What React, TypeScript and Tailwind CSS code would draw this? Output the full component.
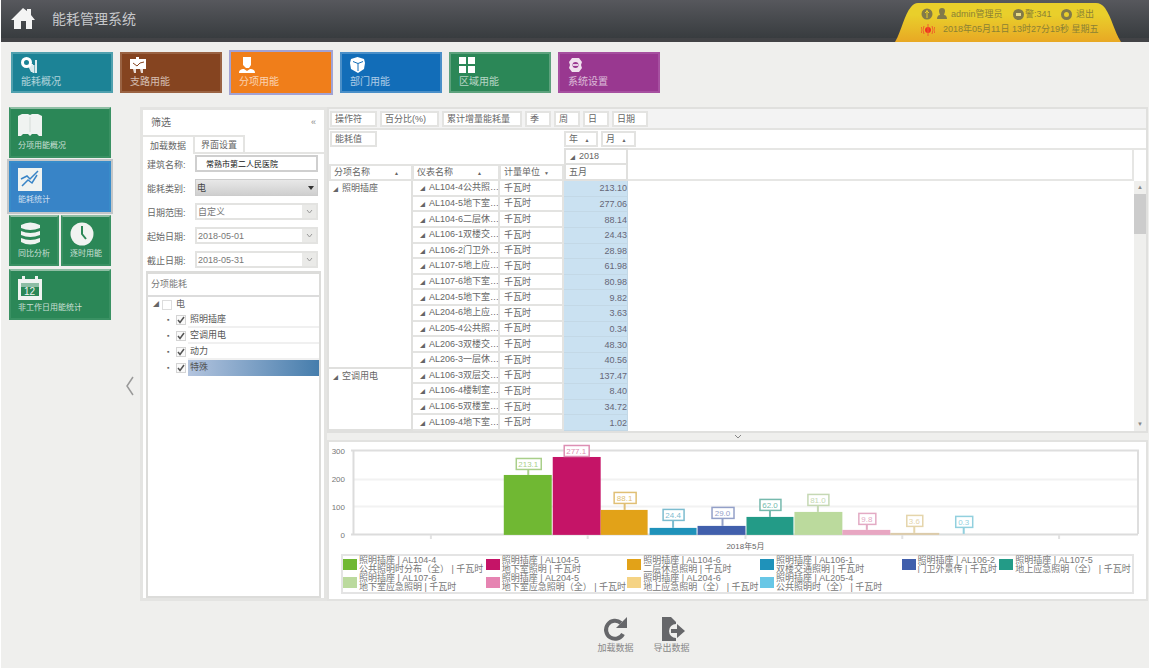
import React from "react";

type Row = { name: string; value: string };

const lightingRows: Row[] = [
  { name: "AL104-4公共照…", value: "213.10" },
  { name: "AL104-5地下室…", value: "277.06" },
  { name: "AL104-6二层休…", value: "88.14" },
  { name: "AL106-1双楼交…", value: "24.43" },
  { name: "AL106-2门卫外…", value: "28.98" },
  { name: "AL107-5地上应…", value: "61.98" },
  { name: "AL107-6地下室…", value: "80.98" },
  { name: "AL204-5地下室…", value: "9.82" },
  { name: "AL204-6地上应…", value: "3.63" },
  { name: "AL205-4公共照…", value: "0.34" },
  { name: "AL206-3双楼交…", value: "48.30" },
  { name: "AL206-3一层休…", value: "40.56" },
];

const airRows: Row[] = [
  { name: "AL106-3双层交…", value: "137.47" },
  { name: "AL106-4楼制室…", value: "8.40" },
  { name: "AL106-5双楼室…", value: "34.72" },
  { name: "AL109-4地下室…", value: "1.02" },
];

const bars = [
  { x: 175, w: 48, top: 33, color: "#70b833", soft: "#a9cf8a", label: "213.1", lx: 187, lw: 25, ly: 16 },
  { x: 224, w: 48, top: 15, color: "#c51467", soft: "#dd8fb3", label: "277.1", lx: 235, lw: 25, ly: 3 },
  { x: 272, w: 47, top: 68, color: "#e2a218", soft: "#e0bf74", label: "88.1", lx: 285, lw: 22, ly: 50 },
  { x: 321, w: 47, top: 86, color: "#1f92ba", soft: "#7cbccf", label: "24.4", lx: 334, lw: 21, ly: 67 },
  { x: 369, w: 48, top: 84, color: "#415fac", soft: "#93a0c8", label: "29.0", lx: 383, lw: 22, ly: 65 },
  { x: 418, w: 47, top: 75, color: "#239b87", soft: "#76b9ad", label: "62.0", lx: 431, lw: 21, ly: 57 },
  { x: 466, w: 48, top: 70, color: "#bbda9d", soft: "#c5d8b4", label: "81.0", lx: 479, lw: 21, ly: 52 },
  { x: 514, w: 48, top: 88, color: "#e8a6c2", soft: "#e3aac4", label: "9.8", lx: 530, lw: 17, ly: 71 },
  { x: 562, w: 49, top: 91, color: "#dccbaa", soft: "#e5d5ab", label: "3.6", lx: 578, lw: 16, ly: 73 },
  { x: 611, w: 49, top: 92, color: "#dce0e0", soft: "#92d0de", label: "0.3", lx: 627, lw: 17, ly: 74 },
];

const legend = [
  { color: "bg-[#70b833]", a: "照明插座 | AL104-4", b: "公共照明时分布（全） | 千瓦时" },
  { color: "bg-[#c51467]", a: "照明插座 | AL104-5", b: "地下室照明 | 千瓦时" },
  { color: "bg-[#e2a218]", a: "照明插座 | AL104-6", b: "二层休息照明 | 千瓦时" },
  { color: "bg-[#1f92ba]", a: "照明插座 | AL106-1", b: "双楼交通照明 | 千瓦时" },
  { color: "bg-[#415fac]", a: "照明插座 | AL106-2", b: "门卫外景传 | 千瓦时" },
  { color: "bg-[#239b87]", a: "照明插座 | AL107-5", b: "地上应急照明（全） | 千瓦时" },
  { color: "bg-[#bbda9d]", a: "照明插座 | AL107-6", b: "地下室应急照明 | 千瓦时" },
  { color: "bg-[#e684b2]", a: "照明插座 | AL204-5", b: "地下室应急照明（全） | 千瓦时" },
  { color: "bg-[#f5d384]", a: "照明插座 | AL204-6", b: "地上应急照明（全） | 千瓦时" },
  { color: "bg-[#68c7e6]", a: "照明插座 | AL205-4", b: "公共照明时（全） | 千瓦时" },
];

const navItems = [
  {
    label: "能耗概况",
    cls: "h-[41px] w-[102px] bg-[#1c8396] border-[#4fa0ae]",
    icon: (
      <>
        <path fillRule="evenodd" d="M5.500 0a5.500 5.500 0 1 0 0 11 5.500 5.500 0 0 0 0-11Zm0 3a2.500 2.500 0 1 1 0 5 2.500 2.500 0 0 1 0-5Z" />
        <path d="M8 8l2-1h2v8h-2l-2-4ZM14 3h2v13h-2ZM11.500 8h2v8h-2Z" opacity=".85" />
      </>
    ),
  },
  {
    label: "支路用能",
    cls: "h-[41px] w-[102px] bg-[#854420] border-[#9a6343]",
    icon: (
      <>
        <path d="M0 2h6V0h3v2h7v10H0Z" />
        <path d="M3 12h3v4H4ZM10 12h3v4h-2Z" opacity=".8" />
        <path d="M3 6l4 3 3-3 4-1" stroke="#854420" fill="none" />
      </>
    ),
  },
  {
    label: "分项用能",
    cls: "-mt-[2px] h-[45px] w-[104px] bg-[#f07e1a] border-[#a2a2d4]",
    icon: <path d="M4 0h8v8l-2 3H7L4 8ZM0 16c0-3 2-4 5-4l3 2 3-2c3 0 5 1 5 4Z" />,
  },
  {
    label: "部门用能",
    cls: "h-[41px] w-[102px] bg-[#126db8] border-[#4a8fc8]",
    icon: (
      <>
        <path d="M7.500 0L14 2l1 4-1 6-6 4-7-4-1-6 1-4Z" />
        <path d="M3 4.500l5 2 5-2M8 6.500V14" stroke="#126db8" fill="none" />
      </>
    ),
  },
  {
    label: "区域用能",
    cls: "h-[41px] w-[102px] bg-[#2b8757] border-[#5da27d]",
    icon: <path d="M0 0h7v7H0ZM9 0h7v7H9ZM0 9h7v7H0ZM9 9h7v7H9Z" />,
  },
  {
    label: "系统设置",
    cls: "h-[41px] w-[102px] bg-[#993890] border-[#a650a0]",
    icon: (
      <>
        <path
          fillRule="evenodd"
          d="M4 1h7l3 4-1 3 1 3-3 4H4l-3-4 1-3-1-3Zm3.500 4a3 3 0 1 0 0 6 3 3 0 0 0 0-6Z"
          opacity=".85"
        />
        <path d="M5 8h5" stroke="#fff" strokeWidth="1.500" />
      </>
    ),
  },
];

function Header() {
  return (
    <header className="flex h-[42px] items-start justify-between border-b-4 border-[#424346] bg-linear-to-b from-[#57585d] to-[#383c3f] pr-7">
      <div className="flex items-center gap-4 pt-[5px] pl-[9px]">
        <svg width="26" height="28" viewBox="0 0 26 28" fill="#f4f4f4" aria-hidden="true">
          <path d="M13 3l4 3V4h4v6l4 5h-3v9h-6v-8h-5v8H4v-9H1Z" />
        </svg>
        <h1 className="text-[14px] leading-5 text-[#c6c7ca]">能耗管理系统</h1>
      </div>
      <div className="relative h-[42px] w-[226px] shrink-0 pt-[8px] pl-[26px] text-[9px] text-[#8b8135]">
        <svg className="absolute inset-0" width="226" height="42" viewBox="0 0 226 42" aria-hidden="true">
          <defs>
            <linearGradient id="tab" x1="0" y1="0" x2="0" y2="1">
              <stop offset="0.300" stopColor="#e9cf2b" />
              <stop offset="1" stopColor="#e8a824" />
            </linearGradient>
          </defs>
          <path d="M0 42C7 30 9 15 16 7q3-4 7-4H201q5 0 9 5c7 10 9 23 16 34Z" fill="url(#tab)" />
        </svg>
        <div className="relative flex h-3 items-center leading-3 whitespace-nowrap">
          <svg width="12" height="12" viewBox="0 0 12 12" aria-hidden="true">
            <circle cx="6" cy="6" r="5.500" fill="#827a49" />
            <path d="M6 2v8M4 5l2-2 2 2" stroke="#e9cf2b" fill="none" />
          </svg>
          <svg className="mr-1 ml-1" width="10" height="12" viewBox="0 0 10 12" fill="#827a49" aria-hidden="true">
            <path d="M2 3a3 3 0 0 1 6 0c0 2-1 3-1 4 2 0 3 2 3 4H0c0-2 1-4 3-4 0-1-1-2-1-4Z" />
          </svg>
          <span className="w-[62px]">admin管理员</span>
          <svg width="11" height="11" viewBox="0 0 11 11" aria-hidden="true">
            <circle cx="5.500" cy="5.500" r="5.500" fill="#827a49" />
            <rect x="3" y="4" width="5" height="3" fill="#e9dc86" />
          </svg>
          <span className="ml-px w-9">警:341</span>
          <svg width="11" height="11" viewBox="0 0 11 11" aria-hidden="true">
            <circle cx="5.500" cy="5.500" r="4" fill="none" stroke="#827a49" strokeWidth="3" />
          </svg>
          <a href="#logout" className="ml-1">退出</a>
        </div>
        <div className="relative flex h-[19px] items-center gap-2 whitespace-nowrap">
          <svg width="14" height="12" viewBox="0 0 14 12" aria-hidden="true">
            <circle cx="7" cy="6" r="3" fill="#f03420" />
            <path d="M3 2q-2 4 0 8M11 2q2 4 0 8M7 0v12M.5 3q-1 3 0 6M13.500 3q1 3 0 6" stroke="#f0602a" fill="none" />
          </svg>
          <time>2018年05月11日 13时27分19秒 星期五</time>
        </div>
      </div>
    </header>
  );
}

function TopNav() {
  return (
    <nav className="flex h-[51px] items-start gap-[7px] px-[10px] pt-[10px]">
      {navItems.map((n) => (
        <button
          key={n.label}
          className={"flex flex-col justify-center border-2 pl-2 text-left text-[10px] leading-3 text-white " + n.cls}
        >
          <svg width="16" height="16" viewBox="0 0 16 16" fill="#fff" aria-hidden="true">
            {n.icon}
          </svg>
          <span className="mt-[3px] text-white/65">{n.label}</span>
        </button>
      ))}
    </nav>
  );
}

function Tile({ label, cls, children }: { label: string; cls: string; children: React.ReactNode }) {
  return (
    <button
      className={"flex h-[51px] flex-1 flex-col border-2 pt-[5px] pl-[7px] text-left text-[8px] leading-3 whitespace-nowrap text-white/75 " + cls}
    >
      <svg width="24" height="24" viewBox="0 0 24 24" fill="#f0f3f1" aria-hidden="true">
        {children}
      </svg>
      <span className="mt-[2px]">{label}</span>
    </button>
  );
}

const green = "bg-[#2b8757] border-[#3a9163] border-t-[#8fbea4]";

function Sidebar() {
  return (
    <aside className="flex w-[102px] shrink-0 flex-col gap-[3px]">
      <div className="flex">
        <Tile label="分项用能概况" cls={green}>
          <path d="M0 2l4-2h6l2 1 2-1h6l4 2v20h-3l-2-2h-5l-2 2-2-2H5l-2 2H0Z" />
          <path d="M12 3v15" stroke="#d5dcd8" />
        </Tile>
      </div>
      <div className="flex">
        <Tile label="能耗统计" cls="bg-[#3884c7] border-[#388cca] outline-2 outline-[#c3c6c8]">
          <path d="M0 0h24v23H0Z" />
          <path d="M3 11l6-3 3 3 8-8M4 18l6-6 4 3 5-8" stroke="#3884c7" strokeWidth="1.500" fill="none" />
        </Tile>
      </div>
      <div className="flex gap-[2px]">
        <Tile label="同比分析" cls={green}>
          <path d="M3 3q9-5 19 0v3q-10 4-19 0ZM3 9q9 4 19 0v4q-10 4-19 0ZM3 16q9 4 19 0v4q-10 5-19 0Z" />
        </Tile>
        <Tile label="逐时用能" cls={green}>
          <circle cx="12" cy="12" r="11.500" />
          <path d="M12 4v8l4 5" stroke="#2b8757" strokeWidth="2" fill="none" />
        </Tile>
      </div>
      <div className="flex">
        <Tile label="非工作日用能统计" cls={green}>
          <path fillRule="evenodd" d="M0 3h4V0h3v3h10V0h3v3h4v21H0ZM3 7v13h18V7Z" />
          <path d="M3 7h18v4H3Z" opacity=".5" />
          <text x="6" y="19" fontSize="10">12</text>
        </Tile>
      </div>
    </aside>
  );
}

const labelCls = "w-[48px] shrink-0 pt-[3px] text-[9px] leading-4 text-[#666] whitespace-nowrap";

function PickRow({ id, label, value }: { id: string; label: string; value: string }) {
  return (
    <div className="flex h-[17px] items-center">
      <label htmlFor={id} className={labelCls}>{label}</label>
      <div className="flex h-[17px] min-w-0 flex-1 border-2 border-[#e3e3e1]">
        <input id={id} defaultValue={value} className="w-full min-w-0 bg-white pl-px text-[9px] leading-3 text-[#777]" />
        <button aria-label={label + "展开"} className="w-[14px] shrink-0 bg-[#eaeae8]">
          <svg className="mx-auto" width="7" height="6" viewBox="0 0 7 6" aria-hidden="true">
            <path d="M1 1l2.500 3L6 1" stroke="#999" fill="none" />
          </svg>
        </button>
      </div>
    </div>
  );
}

function TreeItem({ label, checked, selected }: { label: string; checked: boolean; selected?: boolean }) {
  return (
    <li className="flex h-[16px] items-center pl-[19px]">
      <span className="w-[9px] text-[7px] leading-3 text-[#666]">▪</span>
      <label className="flex min-w-0 flex-1 items-center">
        <span className="relative mr-[2px] flex size-[10px] shrink-0 items-center justify-center">
          <input
            type="checkbox"
            defaultChecked={checked}
            className="peer size-[10px] appearance-none border border-[#d4d4d4] bg-[#fafafa]"
          />
          <svg className="pointer-events-none absolute hidden peer-checked:block" width="8" height="8" viewBox="0 0 8 8" aria-hidden="true">
            <path d="M1 4l2 2.500L7 1" stroke="#555" strokeWidth="1.500" fill="none" />
          </svg>
        </span>
        <span
          className={
            "h-[16px] flex-1 pl-[2px] leading-[15px] text-[#555] " +
            (selected ? "bg-linear-to-r from-[#b3c4de] to-[#457dac]" : "border-b-2 border-[#f0f0f0]")
          }
        >
          {label}
        </span>
      </label>
    </li>
  );
}

function FilterPanel() {
  return (
    <section className="flex w-[187px] shrink-0 flex-col border-[3px] border-[#e4e4e2] bg-white">
      <div className="flex h-[25px] items-center justify-between px-2 text-[10px] text-[#666]">
        <h2>筛选</h2>
        <button aria-label="收起" className="text-[9px] text-[#888]">«</button>
      </div>
      <div className="flex text-[9px] leading-4 text-[#666]" role="tablist">
        <button role="tab" aria-selected="true" className="h-[19px] w-[50px] border-t-2 border-[#e4e4e2]">加载数据</button>
        <button role="tab" aria-selected="false" className="h-[19px] w-[52px] border-2 border-[#e4e4e2]">界面设置</button>
        <span className="flex-1 border-b-2 border-[#e4e4e2]" />
      </div>
      <div className="flex flex-col gap-[7px] pr-[6px] pl-[4px] pt-px">
        <div className="flex h-[17px] items-center">
          <label htmlFor="building" className={labelCls}>建筑名称:</label>
          <input
            id="building"
            defaultValue="常熟市第二人民医院"
            className="h-[17px] min-w-0 flex-1 border-2 border-[#cfcfcf] bg-white pl-[9px] text-[8px] leading-3 text-[#111]"
          />
        </div>
        <div className="flex h-[17px] items-center">
          <label htmlFor="kind" className={labelCls}>能耗类别:</label>
          <div className="relative h-[17px] min-w-0 flex-1">
            <select
              id="kind"
              className="block h-[17px] w-full appearance-none border border-[#ccc] bg-linear-to-b from-[#e8e8e8] to-[#cfcfcf] pl-px text-[9px] leading-3 text-[#444]"
            >
              <option>电</option>
            </select>
            <svg className="pointer-events-none absolute top-[7px] right-[4px]" width="6" height="4" viewBox="0 0 6 4" aria-hidden="true">
              <path d="M0 0h6L3 4Z" fill="#333" />
            </svg>
          </div>
        </div>
        <PickRow id="range" label="日期范围:" value="自定义" />
        <PickRow id="start" label="起始日期:" value="2018-05-01" />
        <PickRow id="end" label="截止日期:" value="2018-05-31" />
      </div>
      <div className="mt-[3px] mr-[3px] ml-[3px] flex-1 border-2 border-t-[3px] border-[#dcdcda] text-[9px]">
        <div className="h-[23px] border-b-2 border-[#dcdcdc] pl-[3px] leading-[21px] text-[#777]">分项能耗</div>
        <ul>
          <li className="flex h-[15px] items-center pl-[5px] text-[#666]">
            <span className="w-[9px] text-[6px]">◢</span>
            <label className="flex items-center gap-1">
              <input type="checkbox" className="size-[10px] appearance-none border border-[#ddd] bg-white" />
              电
            </label>
          </li>
          <TreeItem label="照明插座" checked />
          <TreeItem label="空调用电" checked />
          <TreeItem label="动力" checked />
          <TreeItem label="特殊" checked selected />
        </ul>
      </div>
    </section>
  );
}

const chip = "h-[16px] border-2 border-[#e3e3e1] bg-white px-[3px] text-left leading-3 whitespace-nowrap";

function BodyRows({ group, rows }: { group: string; rows: Row[] }) {
  return (
    <>
      {rows.map((r, i) => (
        <tr key={r.name}>
          {i === 0 && (
            <th
              scope="rowgroup"
              rowSpan={rows.length}
              className="border-r-2 border-b-2 border-[#e0e0de] pt-px pl-1 text-left align-top font-normal"
            >
              <span className="mr-1 text-[5px]">◢</span>
              {group}
            </th>
          )}
          <td className="overflow-hidden border-r-2 border-b-2 border-[#e3e3e1] p-0 pl-[7px] whitespace-nowrap">
            <span className="mr-1 text-[5px]">◢</span>
            {r.name}
          </td>
          <td className="border-r-2 border-b-2 border-[#e3e3e1] p-0 pl-1">千瓦时</td>
          <td className="border-r border-b border-[#c3d8e6] bg-[#cae1f1] p-0 text-right text-[#667]">{r.value}</td>
        </tr>
      ))}
    </>
  );
}

function PivotGrid() {
  return (
    <section className="border-2 border-[#e0e0de] bg-white text-[9px] text-[#666]">
      <div className="flex h-[21px] items-center gap-[3px] border-b-2 border-[#e3e3e1] bg-[#f3f3f3] px-px">
        <button className={chip + " w-[47px]"}>操作符</button>
        <button className={chip + " w-[59px]"}>百分比(%)</button>
        <button className={chip + " w-[80px]"}>累计增量能耗量</button>
        <button className={chip + " w-[26px]"}>季</button>
        <button className={chip + " w-[26px]"}>周</button>
        <button className={chip + " w-[26px]"}>日</button>
        <button className={chip + " w-[36px]"}>日期</button>
      </div>
      <div className="flex h-[18px] items-center px-px">
        <div className="w-[234px]">
          <button className={chip + " w-[47px]"}>能耗值</button>
        </div>
        <div className="flex gap-[3px]">
          <button className={chip + " w-[34px]"}>年 <span className="ml-1 text-[5px]">▲</span></button>
          <button className={chip + " w-[35px]"}>月 <span className="ml-1 text-[5px]">▲</span></button>
        </div>
      </div>
      <div className="flex">
        <table className="w-[299px] shrink-0 table-fixed border-separate border-spacing-0 leading-3">
          <colgroup>
            <col className="w-[84px]" />
            <col className="w-[87px]" />
            <col className="w-[64px]" />
            <col className="w-[64px]" />
          </colgroup>
          <thead>
            <tr className="h-[15px]">
              <td colSpan={3} className="p-0" />
              <th className="border-2 border-b border-[#e0e0de] p-0 pl-1 text-left font-normal">
                <span className="mr-1 text-[5px]">◢</span>2018
              </th>
            </tr>
            <tr className="h-[17px]">
              <th className="border-2 border-[#e3e3e1] p-0 pl-[3px] text-left font-normal">
                分项名称<span className="ml-6 text-[5px]">▲</span>
              </th>
              <th className="border-2 border-l border-[#e3e3e1] p-0 pl-[3px] text-left font-normal">
                仪表名称<span className="ml-6 text-[5px]">▲</span>
              </th>
              <th className="border-2 border-l border-[#e3e3e1] p-0 pl-[3px] text-left font-normal">
                计量单位<span className="ml-1 text-[5px]">▼</span>
              </th>
              <th className="border-2 border-t border-[#e0e0de] p-0 pl-[3px] text-left font-normal">五月</th>
            </tr>
          </thead>
        </table>
        <div className="flex-1 border-t-2 border-r-2 border-b-2 border-[#e6e6e4]" />
        <div className="w-[12px] border-t-2 border-[#e6e6e4]" />
      </div>
      <div className="flex">
        <table className="h-[250px] w-[299px] shrink-0 table-fixed border-separate border-spacing-0 leading-3">
          <colgroup>
            <col className="w-[84px]" />
            <col className="w-[87px]" />
            <col className="w-[64px]" />
            <col className="w-[64px]" />
          </colgroup>
          <tbody>
            <BodyRows group="照明插座" rows={lightingRows} />
            <BodyRows group="空调用电" rows={airRows} />
          </tbody>
        </table>
        <div className="flex-1" />
        <div className="flex w-[12px] flex-col items-center bg-[#efefed] text-[6px] leading-[13px] text-[#888]">
          <span>▲</span>
          <div className="h-[40px] w-full bg-[#cccccc]" />
          <span className="mt-auto">▼</span>
        </div>
      </div>
    </section>
  );
}

function Chart() {
  return (
    <section className="flex-1 border-2 border-[#e2e2e0] bg-white">
      <svg className="block h-auto w-full" viewBox="0 0 818 112" fontFamily="Liberation Sans, Noto Sans CJK SC, sans-serif" role="img" aria-label="能耗柱状图">
        <path d="M24 37.500H810M24 64.500H810" stroke="#f2f2f2" strokeWidth="2" />
        <path d="M22 8.500H810V92" stroke="#dedede" strokeWidth="2" fill="none" />
        <path d="M24.500 8V93M22 92.500H810" stroke="#dcdcdc" strokeWidth="2" />
        <path d="M102 93v4M259 93v4M417 93v4M574 93v4M731 93v4" stroke="#e2e2e2" strokeWidth="2" />
        {[300, 200, 100, 0].map((v, i) => (
          <text key={v} x="16" y={12 + i * 28} textAnchor="end" fontSize="8" fill="#777">{v}</text>
        ))}
        {bars.map((b) => (
          <g key={b.label}>
            <rect x={b.x} y={b.top} width={b.w} height={93 - b.top} fill={b.color} />
            <path d={`M${b.lx + b.lw / 2} ${b.ly + 12}V${b.top}`} stroke={b.soft} strokeWidth="2" />
            <rect x={b.lx + 0.5} y={b.ly + 0.5} width={b.lw} height="11" fill="#fff" stroke={b.soft} strokeWidth="1.500" />
            <text x={b.lx + b.lw / 2} y={b.ly + 9} textAnchor="middle" fontSize="8" fill={b.soft}>{b.label}</text>
          </g>
        ))}
        <text x="417" y="107" textAnchor="middle" fontSize="8" fill="#666">2018年5月</text>
      </svg>
      <ul className="mx-3 grid grid-cols-[143fr_142fr_133fr_142fr_98fr_133fr] border-2 border-[#e4e4e4] text-[9px] leading-[9px] text-[#777]">
        {legend.map((l) => (
          <li key={l.a} className="flex items-center gap-[2px] whitespace-nowrap">
            <span className={"h-[11px] w-[14px] shrink-0 " + l.color} />
            <span>
              {l.a}
              <br />
              {l.b}
            </span>
          </li>
        ))}
      </ul>
    </section>
  );
}

export default function App() {
  return (
    <div className="min-h-screen bg-white pr-[2px] pb-[2px] pl-px font-['Liberation_Sans','Noto_Sans_CJK_SC',sans-serif]">
      <div className="flex min-h-[calc(100vh-2px)] flex-col bg-[#efefed]">
        <Header />
        <TopNav />
        <main className="flex pt-[14px] pr-px pl-2">
          <Sidebar />
          <button aria-label="折叠侧栏" className="flex w-[29px] shrink-0 items-center justify-center pt-[64px] pl-[8px]">
            <svg width="10" height="20" viewBox="0 0 10 20" aria-hidden="true">
              <path d="M8 1L2 10l6 9" stroke="#999" strokeWidth="1.500" fill="none" />
            </svg>
          </button>
          <FilterPanel />
          <div className="flex h-[494px] min-w-0 flex-1 flex-col">
            <PivotGrid />
            <div className="flex h-[7px] items-center justify-center">
              <svg width="8" height="5" viewBox="0 0 8 5" aria-hidden="true">
                <path d="M1 1l3 3 3-3" stroke="#888" fill="none" />
              </svg>
            </div>
            <Chart />
          </div>
        </main>
        <footer className="flex justify-center gap-[20px] pt-[15px] pl-[137px] text-[9px] leading-3 text-[#888]">
          <button className="flex flex-col items-center">
            <svg width="26" height="26" viewBox="0 0 26 26" aria-hidden="true">
              <path d="M19 7a9 9 0 1 0 2 11" stroke="#66676a" strokeWidth="4" fill="none" />
              <path d="M25 1v11H14Z" fill="#66676a" />
            </svg>
            加载数据
          </button>
          <button className="flex flex-col items-center">
            <svg width="26" height="26" viewBox="0 0 26 26" aria-hidden="true">
              <path d="M3 1h9l5 5v19H3Z" fill="#66676a" />
              <circle cx="17" cy="15" r="7" fill="#efefed" />
              <path d="M12 13h6V8l8 7-8 7v-5h-6Z" fill="#66676a" />
            </svg>
            导出数据
          </button>
        </footer>
      </div>
    </div>
  );
}
